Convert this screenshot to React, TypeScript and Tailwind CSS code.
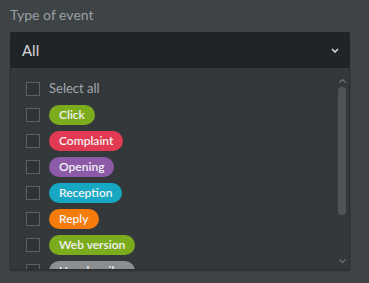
import { useState } from 'react';

const EVENTS = [
  { name: 'Click', color: 'bg-[#7cab1c]' },
  { name: 'Complaint', color: 'bg-[#e23a52]' },
  { name: 'Opening', color: 'bg-[#8d5aa9]' },
  { name: 'Reception', color: 'bg-[#16a8c3]' },
  { name: 'Reply', color: 'bg-[#f57c0a]' },
  { name: 'Web version', color: 'bg-[#7cab1c]' },
  { name: 'Unsubscribe', color: 'bg-[#8b8f92]' },
];

function Checkbox({ checked, onClick }: { checked: boolean; onClick: () => void }) {
  return (
    <button
      onClick={onClick}
      className={`w-[14px] h-[14px] shrink-0 border border-[#5a6064] ${checked ? 'bg-[#7cab1c]' : 'bg-[#2f3336]'}`}
    />
  );
}

export default function App() {
  const [selected, setSelected] = useState<string[]>([]);

  const toggle = (name: string) => {
    setSelected(prev => prev.includes(name) ? prev.filter(n => n !== name) : [...prev, name]);
  };

  return (
    <div className="w-[369px] h-[283px] bg-[#3e4346] px-[10px] pt-[5px] overflow-hidden" style={{ fontFamily: 'Lato, "Open Sans", sans-serif' }}>
      <p className="text-[14px] leading-[20px] text-[#9aa0a4] mb-[7px]">Type of event</p>

      {/* Select */}
      <div className="w-[340px] h-[36px] bg-[#212427] rounded-t-[2px] flex items-center justify-between pl-[12px] pr-[11px]">
        <span className="text-[15px] text-[#d4d7d9]">All</span>
        <svg width="8" height="5" viewBox="0 0 8 5" className="text-[#d4d7d9]">
          <path d="M1 1l3 3 3-3" fill="none" stroke="currentColor" strokeWidth="1.6" />
        </svg>
      </div>

      {/* Options panel */}
      <div className="w-[340px] h-[202px] bg-[#33383b] border-x border-b border-[#2a2e31] flex shadow-[0_1px_2px_rgba(0,0,0,0.3)]">
        <div className="flex-1 pt-[8px] pl-[15px] overflow-hidden">
          <div className="h-[26px] flex items-center gap-[9px]">
            <Checkbox checked={selected.length === EVENTS.length} onClick={() => setSelected(selected.length === EVENTS.length ? [] : EVENTS.map(e => e.name))} />
            <span className="text-[13px] text-[#a3a8ab]">Select all</span>
          </div>
          {EVENTS.map(ev => (
            <div key={ev.name} className="h-[26px] flex items-center gap-[9px]">
              <Checkbox checked={selected.includes(ev.name)} onClick={() => toggle(ev.name)} />
              <span className={`${ev.color} h-[20px] leading-[20px] px-[10px] rounded-full text-[12px] font-semibold text-[#f2f2f2]`}>
                {ev.name}
              </span>
            </div>
          ))}
        </div>
        {/* scrollbar */}
        <div className="w-[12px] mr-[1px] flex flex-col items-center pt-[11px] pb-[6px]">
          <svg width="7" height="4" viewBox="0 0 7 4" className="text-[#6c7276]">
            <path d="M0.5 3.5l3-3 3 3" fill="none" stroke="currentColor" strokeWidth="1.2" />
          </svg>
          <div className="w-[8px] h-[128px] mt-[4px] rounded-full bg-[#4d5357]" />
          <div className="flex-1" />
          <svg width="7" height="4" viewBox="0 0 7 4" className="text-[#6c7276]">
            <path d="M0.5 0.5l3 3 3-3" fill="none" stroke="currentColor" strokeWidth="1.2" />
          </svg>
        </div>
      </div>
    </div>
  );
}
